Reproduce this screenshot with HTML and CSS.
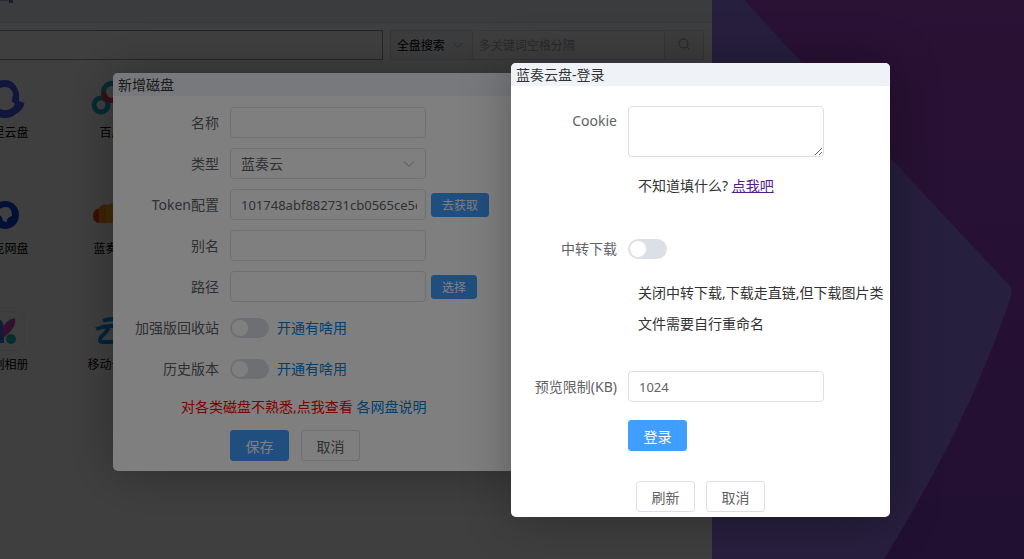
FILE: index.html
```html
<!DOCTYPE html>
<html lang="zh-CN">
<head>
    <meta charset="UTF-8">
    <meta name="viewport" content="width=device-width, initial-scale=1.0">
    <title>新增磁盘</title>
    <link rel="stylesheet" href="styles.css">
</head>
<body>
    <svg class="wallpaper" viewBox="0 0 1024 559" preserveAspectRatio="xMinYMin slice" aria-hidden="true">
        <defs>
            <linearGradient id="sky" x1="0" y1="0" x2="0" y2="1">
                <stop offset="0" stop-color="#a848d4"/>
                <stop offset="1" stop-color="#8840cc"/>
            </linearGradient>
        </defs>
        <rect width="1024" height="559" fill="url(#sky)"/>
        <path d="M600 0H744L892 160L1008 284Q1014 290 1010 299Q970 420 884 559H600Z" fill="#9c7cf8"/>
    </svg>

    <main class="app-window">
        <header class="app-header">
            <svg viewBox="0 0 16 4" aria-hidden="true"><path d="M0 0H13V1H0Z" fill="#a0b0e0"/><path d="M9 0H13V3H9Z" fill="#778"/></svg>
        </header>
        <div class="toolbar">
            <input type="text" class="path-input" aria-label="当前路径">
            <div class="search-group">
                <div class="select-wrap">
                    <select aria-label="搜索范围">
                        <option>全盘搜索</option>
                    </select>
                    <svg class="chevron" viewBox="0 0 12 12"><path d="M1 3.5L6 8.5L11 3.5"/></svg>
                </div>
                <input type="text" placeholder="多关键词空格分隔" aria-label="搜索">
                <button type="button" aria-label="搜索">
                    <svg viewBox="0 0 12 12"><circle cx="5.5" cy="5.5" r="4.5"/><path d="M9 9L11 11"/></svg>
                </button>
            </div>
        </div>
        <div class="disk-grid">
            <div class="disk">
                <svg viewBox="0 0 42 42"><path d="M21 2A19 19 0 1 0 33.5 35Q39 32 40.5 25L35 23V15Q31 2 21 2ZM21 9Q28 9 29 17L27.5 23L31 26Q28 32 21 32A11.5 11.5 0 1 1 21 9Z" fill="#4858f0"/></svg>
                <span>阿里云盘</span>
            </div>
            <div class="disk">
                <svg viewBox="0 0 42 42"><g fill="none" stroke-width="5"><circle cx="21" cy="14" r="8.5" stroke="#20a8d0"/><circle cx="10" cy="27" r="7" stroke="#20a8d0"/><circle cx="32" cy="27" r="7" stroke="#e83848"/><path d="M12.5 14Q13 22.5 21 22.5L27 21" stroke="#e83848"/></g></svg>
                <span>百度</span>
            </div>
            <div class="disk">
                <svg viewBox="0 0 42 42"><circle cx="21" cy="21" r="14" fill="#0840e0"/><path d="M22 13Q14 13 14 20L18 23Q18 28 23 28Q22 24 28 22Q28 13 22 13Z" fill="#fff"/></svg>
                <span>夸克网盘</span>
            </div>
            <div class="disk">
                <svg viewBox="0 0 42 42"><path d="M9 14Q2 15 2 22Q2 29 9 29Z" fill="#e84010"/><path d="M8 14Q12 8 19 12V29H8Z" fill="#f88820"/><path d="M15 13Q24 4 31 13Q40 14 40 22Q40 29 32 29H15Z" fill="#f8a820"/><path d="M22 9Q29 8 31 13Q40 14 40 22Q40 29 32 29H22Z" fill="#f8d020"/></svg>
                <span>蓝奏云</span>
            </div>
            <div class="disk">
                <svg viewBox="0 0 42 42"><rect x="1.5" y="1.5" width="39" height="39" rx="7" fill="none" stroke="#eee"/><path d="M3 31Q2 14 12 9Q20 8 20 20V33H9Z" fill="#3070e8"/><path d="M18 20Q22 9 31 8Q33 18 19 28Z" fill="#c048b8"/><circle cx="27" cy="29" r="5" fill="#18b8b0"/></svg>
                <span>一刻相册</span>
            </div>
            <div class="disk">
                <svg viewBox="0 0 42 42"><path d="M12 11Q21 7 34 11M5 19Q20 13 38 19M18 18Q14 24 10 27Q7 32 12 32H31Q36 31 32 26L27 21" fill="none" stroke="#1090e8" stroke-width="4"/></svg>
                <span>移动云盘</span>
            </div>
        </div>
    </main>
    <div class="mask"></div>

    <section class="dialog add-dialog" aria-label="新增磁盘">
        <h2>新增磁盘</h2>
        <form class="add-form">
            <div class="row">
                <label for="name">名称</label>
                <input type="text" id="name">
            </div>
            <div class="row">
                <label for="type">类型</label>
                <div class="select-wrap">
                    <select id="type">
                        <option>蓝奏云</option>
                    </select>
                    <svg class="chevron" viewBox="0 0 12 12"><path d="M1 3.5L6 8.5L11 3.5"/></svg>
                </div>
            </div>
            <div class="row">
                <label for="token">Token配置</label>
                <input type="text" id="token" value="101748abf882731cb0565ce5e">
                <button type="button" class="btn primary small">去获取</button>
            </div>
            <div class="row">
                <label for="alias">别名</label>
                <input type="text" id="alias">
            </div>
            <div class="row">
                <label for="path">路径</label>
                <input type="text" id="path">
                <button type="button" class="btn primary small">选择</button>
            </div>
            <div class="row">
                <label for="recycle">加强版回收站</label>
                <input type="checkbox" class="switch" id="recycle">
                <a href="#">开通有啥用</a>
            </div>
            <div class="row">
                <label for="history">历史版本</label>
                <input type="checkbox" class="switch" id="history">
                <a href="#">开通有啥用</a>
            </div>
            <p class="tip">对各类磁盘不熟悉,点我查看 <a href="#">各网盘说明</a></p>
            <div class="actions">
                <button type="button" class="btn primary">保存</button>
                <button type="button" class="btn">取消</button>
            </div>
        </form>
    </section>
    <div class="mask"></div>

    <section class="dialog login-dialog" aria-label="蓝奏云盘-登录">
        <h2>蓝奏云盘-登录</h2>
        <form class="login-form">
            <div class="row top">
                <label for="cookie">Cookie</label>
                <textarea id="cookie"></textarea>
            </div>
            <p class="hint">不知道填什么? <a href="#">点我吧</a></p>
            <div class="row">
                <label for="transfer">中转下载</label>
                <input type="checkbox" class="switch" id="transfer">
            </div>
            <p class="hint">关闭中转下载,下载走直链,但下载图片类文件需要自行重命名</p>
            <div class="row">
                <label for="limit">预览限制(KB)</label>
                <input type="text" id="limit" value="1024">
            </div>
            <div class="submit">
                <button type="button" class="btn primary">登录</button>
            </div>
            <div class="actions">
                <button type="button" class="btn">刷新</button>
                <button type="button" class="btn">取消</button>
            </div>
        </form>
    </section>
</body>
</html>
```

FILE: styles.css
```css
* {
    box-sizing: border-box;
}
body {
    margin: 0;
    min-height: 100vh;
    overflow: hidden;
    font-family: "Noto Sans", "Noto Sans CJK SC", sans-serif;
    font-size: 14px;
    color: #333;
}
input, select, textarea, button {
    font-family: inherit;
    margin: 0;
}
.wallpaper {
    position: absolute;
    width: 100%;
    height: 100%;
}
.mask {
    position: absolute;
    inset: 0;
    background: rgba(0, 0, 0, 0.5);
}

/* file manager window, runs off the left edge */
.app-window {
    position: absolute;
    top: 0;
    bottom: 0;
    left: -49px;
    width: calc(69.5% + 49px);
    background: #fff;
}
.app-header {
    display: flex;
    height: 23px;
    padding-left: 49px;
    background: #eff3f8;
    border-bottom: 1px solid #ddd;
}
.app-header svg {
    width: 16px;
    height: 4px;
}
.toolbar {
    display: flex;
    gap: 7px;
    padding: 7px 8px 0 0;
}
.path-input {
    flex: 1;
    height: 30px;
    border: 1px solid #999;
}
.search-group {
    display: flex;
    width: 314px;
    height: 30px;
    border: 1px solid #dcdfe6;
}
.search-group .select-wrap {
    width: 82px;
    border-right: 1px solid #dcdfe6;
}
.search-group select {
    padding: 0 6px;
    border: none;
    background: #f5f7fa;
    color: #000;
    font-size: 12px;
}
.search-group .chevron {
    margin-right: 8px;
}
.search-group input {
    flex: 1;
    min-width: 0;
    padding: 0 6px;
    border: none;
    font-size: 12px;
}
.search-group input::placeholder {
    color: #a8abb2;
}
.search-group button {
    width: 39px;
    padding: 0;
    border: none;
    border-left: 1px solid #dcdfe6;
    background: #f5f7fa;
}
.search-group button svg {
    width: 12px;
    height: 12px;
    fill: none;
    stroke: #909399;
}
.disk-grid {
    display: grid;
    grid-template-columns: repeat(2, 107px);
    row-gap: 50px;
    padding-top: 18px;
}
.disk {
    display: flex;
    flex-direction: column;
    align-items: center;
    gap: 2px;
    color: #000;
    font-size: 12px;
    line-height: 22px;
}
.disk svg {
    width: 42px;
    height: 42px;
}

/* dialogs */
.dialog {
    position: absolute;
    background: #fff;
    border-radius: 5px;
    box-shadow: 1px 1px 50px rgba(0, 0, 0, 0.3);
}
.add-dialog {
    top: 73px;
    left: 113px;
    width: 410px;
}
.login-dialog {
    top: 63px;
    left: 511px;
    width: 379px;
}
.dialog h2 {
    margin: 0;
    padding-left: 5px;
    border-radius: 5px 5px 0 0;
    background: #eff3f8;
    font-size: 14px;
    font-weight: normal;
    line-height: 23px;
}
.add-form {
    display: flex;
    flex-direction: column;
    gap: 10px;
    padding: 11px 0 10px;
}
.login-form {
    padding: 20px 0 5px;
}
.row {
    display: flex;
    align-items: center;
    min-height: 31px;
}
.row.top {
    align-items: flex-start;
}
.row label {
    width: 106px;
    margin-right: 11px;
    color: #606266;
    line-height: 30px;
    text-align: right;
}
.row input[type="text"], .row select, textarea {
    width: 196px;
    height: 31px;
    padding: 0 8px 0 10px;
    border: 1px solid #dcdfe6;
    border-radius: 4px;
    background: #fff;
    color: #606266;
    font-size: 13px;
}
.row select {
    font-size: 14px;
}
textarea {
    height: 51px;
    resize: vertical;
}
.select-wrap {
    display: grid;
    align-items: center;
}
.select-wrap select {
    grid-area: 1 / 1;
    width: 100%;
    height: 100%;
    appearance: none;
}
.row .select-wrap {
    width: 196px;
    height: 31px;
}
.chevron {
    grid-area: 1 / 1;
    justify-self: end;
    width: 12px;
    height: 12px;
    margin-right: 11px;
    fill: none;
    stroke: #a8abb2;
    pointer-events: none;
}
.switch {
    appearance: none;
    display: flex;
    align-items: center;
    width: 39px;
    height: 20px;
    padding: 2px;
    border-radius: 10px;
    background: #dcdfe6;
}
.switch::before {
    content: "";
    width: 16px;
    height: 16px;
    border-radius: 50%;
    background: #fff;
}
.switch:checked {
    justify-content: flex-end;
    background: #409eff;
}
.btn {
    width: 59px;
    height: 31px;
    padding: 0;
    border: 1px solid #dcdfe6;
    border-radius: 3px;
    background: #fff;
    color: #606266;
    font-size: 14px;
    cursor: pointer;
}
.btn.primary {
    border-color: #409eff;
    background: #409eff;
    color: #fff;
}
.btn.small {
    width: auto;
    height: 24px;
    margin-left: 5px;
    padding: 0 10px;
    font-size: 12px;
}
.add-form a {
    color: #0080dd;
    text-decoration: none;
}
.row a {
    margin-left: 8px;
    line-height: 30px;
}
.tip {
    margin: 0;
    padding-left: 68px;
    color: #f00;
    line-height: 26px;
}
.actions {
    display: flex;
    gap: 12px;
    padding-left: 117px;
}
.hint {
    margin: 13px 4px 32px 127px;
    line-height: 31px;
}
.hint a {
    color: #551a8b;
}
.submit {
    padding: 18px 0 30px 117px;
}
.login-form .actions {
    gap: 11px;
    padding-left: 125px;
}
```
